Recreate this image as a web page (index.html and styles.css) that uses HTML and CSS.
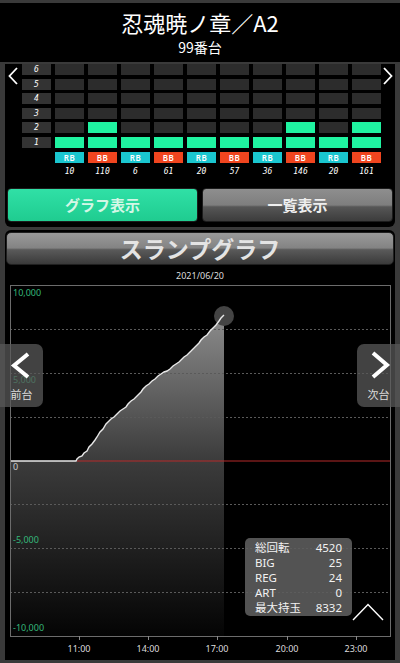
FILE: index.html
```html
<!DOCTYPE html>
<html lang="ja">
<head>
  <meta charset="UTF-8" />
  <meta name="viewport" content="width=device-width, initial-scale=1.0"/>
  <title>スランプグラフ</title>
  <link rel="stylesheet" href="styles.css">
</head>
<body>
  <div class="header">
    <div class="title">忍魂暁ノ章／A2</div>
    <div class="sub">99番台</div>
  </div>

  <div class="panel top">
    <div class="history">
      <div class="side left">
        <svg width="10" height="18" viewBox="0 0 10 18"><polyline points="9,1 1.5,9 9,17" fill="none" stroke="#fff" stroke-width="1.8"/></svg>
      </div>
      <div class="grid">
        <div class="lbl">6</div>
        <div class="c"></div><div class="c"></div><div class="c"></div><div class="c"></div><div class="c"></div>
        <div class="c"></div><div class="c"></div><div class="c"></div><div class="c"></div><div class="c"></div>
        <div class="lbl">5</div>
        <div class="c"></div><div class="c"></div><div class="c"></div><div class="c"></div><div class="c"></div>
        <div class="c"></div><div class="c"></div><div class="c"></div><div class="c"></div><div class="c"></div>
        <div class="lbl">4</div>
        <div class="c"></div><div class="c"></div><div class="c"></div><div class="c"></div><div class="c"></div>
        <div class="c"></div><div class="c"></div><div class="c"></div><div class="c"></div><div class="c"></div>
        <div class="lbl">3</div>
        <div class="c"></div><div class="c"></div><div class="c"></div><div class="c"></div><div class="c"></div>
        <div class="c"></div><div class="c"></div><div class="c"></div><div class="c"></div><div class="c"></div>
        <div class="lbl">2</div>
        <div class="c"></div><div class="c on"></div><div class="c"></div><div class="c"></div><div class="c"></div>
        <div class="c"></div><div class="c"></div><div class="c on"></div><div class="c"></div><div class="c on"></div>
        <div class="lbl">1</div>
        <div class="c on"></div><div class="c on"></div><div class="c on"></div><div class="c on"></div><div class="c on"></div>
        <div class="c on"></div><div class="c on"></div><div class="c on"></div><div class="c on"></div><div class="c on"></div>

        <div></div>
        <div class="kind rb">RB</div><div class="kind bb">BB</div><div class="kind rb">RB</div><div class="kind bb">BB</div><div class="kind rb">RB</div>
        <div class="kind bb">BB</div><div class="kind rb">RB</div><div class="kind bb">BB</div><div class="kind rb">RB</div><div class="kind bb">BB</div>

        <div></div>
        <div class="num">10</div><div class="num">110</div><div class="num">6</div><div class="num">61</div><div class="num">20</div>
        <div class="num">57</div><div class="num">36</div><div class="num">146</div><div class="num">20</div><div class="num">161</div>
      </div>
      <div class="side right">
        <svg width="10" height="18" viewBox="0 0 10 18"><polyline points="1,1 8.5,9 1,17" fill="none" stroke="#fff" stroke-width="1.8"/></svg>
      </div>
    </div>

    <div class="tabs">
      <div class="tab active">グラフ表示</div>
      <div class="tab">一覧表示</div>
    </div>
  </div>

  <div class="panel graph">
    <div class="graph-title">スランプグラフ</div>
    <div class="date">2021/06/20</div>

    <svg class="chart" width="390" height="376" viewBox="5 284 390 376">
      <defs>
        <linearGradient id="fill" gradientUnits="userSpaceOnUse" x1="0" y1="315" x2="0" y2="636">
          <stop offset="0" stop-color="#8c8c8c"/>
          <stop offset="0.45" stop-color="#3c3c3c"/>
          <stop offset="1" stop-color="#040404"/>
        </linearGradient>
      </defs>

      <path d="M10,461 L76,461 L77,459 L79,457 L82,456 L84,453 L87,451 L89,447 L92,444 L95,440 L97,437 L100,432 L103,429 L106,424 L108,422 L111,419 L114,417 L117,414 L120,411 L123,409 L126,407 L128,404 L131,401 L134,399 L137,396 L139,394 L141,392 L143,389 L146,386 L149,384 L152,381 L155,379 L158,376 L161,374 L164,372 L167,371 L170,369 L173,366 L176,364 L179,362 L182,359 L184,357 L187,355 L190,352 L193,349 L196,346 L199,343 L201,340 L204,337 L207,335 L210,331 L213,328 L216,325 L219,321 L221,318 L224,315 L224,636 L10,636 Z" fill="url(#fill)"/>

      <g stroke="#5a5a5a" stroke-width="1" stroke-dasharray="2,2">
        <line x1="10" y1="329.5" x2="390" y2="329.5"/>
        <line x1="10" y1="373.5" x2="390" y2="373.5"/>
        <line x1="10" y1="417.5" x2="390" y2="417.5"/>
        <line x1="10" y1="504.5" x2="390" y2="504.5"/>
        <line x1="10" y1="548.5" x2="390" y2="548.5"/>
        <line x1="10" y1="592.5" x2="390" y2="592.5"/>
      </g>
      <line x1="77" y1="461" x2="390" y2="461" stroke="#b52a2a" stroke-width="1.2"/>

      <circle cx="224" cy="316" r="10" fill="#444"/>
      <path d="M10,461 L76,461 L77,459 L79,457 L82,456 L84,453 L87,451 L89,447 L92,444 L95,440 L97,437 L100,432 L103,429 L106,424 L108,422 L111,419 L114,417 L117,414 L120,411 L123,409 L126,407 L128,404 L131,401 L134,399 L137,396 L139,394 L141,392 L143,389 L146,386 L149,384 L152,381 L155,379 L158,376 L161,374 L164,372 L167,371 L170,369 L173,366 L176,364 L179,362 L182,359 L184,357 L187,355 L190,352 L193,349 L196,346 L199,343 L201,340 L204,337 L207,335 L210,331 L213,328 L216,325 L219,321 L221,318 L224,315" fill="none" stroke="#e8e8e8" stroke-width="1.4"/>

      <rect x="10.5" y="285.5" width="380" height="351" fill="none" stroke="#6c6c6c" stroke-width="1"/>
      <g stroke="#888" stroke-width="1">
        <line x1="79.5" y1="636" x2="79.5" y2="640"/>
        <line x1="148.5" y1="636" x2="148.5" y2="640"/>
        <line x1="217.5" y1="636" x2="217.5" y2="640"/>
        <line x1="287.5" y1="636" x2="287.5" y2="640"/>
        <line x1="356.5" y1="636" x2="356.5" y2="640"/>
      </g>

      <g class="ylab">
        <text x="13" y="296">10,000</text>
        <text x="13" y="383">5,000</text>
        <text x="13" y="543">-5,000</text>
        <text x="13" y="631">-10,000</text>
      </g>
      <text class="zero" x="13" y="470">0</text>
      <g class="xlab">
        <text x="79" y="652">11:00</text>
        <text x="148" y="652">14:00</text>
        <text x="217" y="652">17:00</text>
        <text x="287" y="652">20:00</text>
        <text x="356" y="652">23:00</text>
      </g>
    </svg>

    <div class="jump prev">
      <svg width="43" height="40" viewBox="0 0 43 40"><polyline points="28,10 14,21.5 28,33" fill="none" stroke="#fff" stroke-width="4"/></svg>
      <span>前台</span>
    </div>
    <div class="jump next">
      <svg width="43" height="40" viewBox="0 0 43 40"><polyline points="16,9 30,21 16,33" fill="none" stroke="#fff" stroke-width="4"/></svg>
      <span>次台</span>
    </div>

    <div class="stats">
      <span>総回転</span><span class="v">4520</span>
      <span>BIG</span><span class="v">25</span>
      <span>REG</span><span class="v">24</span>
      <span>ART</span><span class="v">0</span>
      <span>最大持玉</span><span class="v">8332</span>
    </div>

    <svg class="to-top" width="32" height="18" viewBox="0 0 32 18"><polyline points="1,17 16,1.5 31,17" fill="none" stroke="#fff" stroke-width="1.4"/></svg>
  </div>
</body>
</html>
```

FILE: styles.css
```css
body {
  margin: 0;
  padding-top: 3px;
  width: 400px;
  height: 660px;
  overflow: hidden;
  background: #3a3a3a;
  color: #fff;
  font-family: "Noto Sans CJK JP", "Noto Sans", sans-serif;
}
.header {
  background: #000;
  height: 59px;
  text-align: center;
}
.title {
  padding-top: 6px;
  font-size: 22px;
  line-height: 26px;
}
.sub {
  margin-top: 3px;
  font-size: 14px;
  line-height: 18px;
}
.panel {
  background: #000;
  margin: 0 5px;
}
.panel.top {
  margin-top: 2px;
  padding-bottom: 5px;
  border-radius: 0 0 6px 6px;
}
.history {
  display: flex;
}
.side {
  width: 17px;
}
.side.left svg {
  margin: 3px 0 0 3px;
}
.side.right {
  width: 14px;
}
.side.right svg {
  margin: 3px 0 0 2px;
}
.grid {
  display: grid;
  grid-template-columns: repeat(11, 29px);
  grid-auto-rows: 11px;
  column-gap: 4px;
  row-gap: 3.6px;
}
.lbl {
  background: #333;
  font-family: "DejaVu Sans Mono", monospace;
  font-style: italic;
  font-size: 8px;
  line-height: 11px;
  text-align: center;
}
.c {
  background: #2c2c2c;
}
.c.on {
  background: #1ff3a0;
}
.kind {
  font-family: "Noto Sans", sans-serif;
  font-size: 8px;
  font-weight: 600;
  line-height: 11px;
  text-align: center;
  letter-spacing: 0.5px;
}
.rb {
  background: #1ac6cf;
}
.bb {
  background: #f0451f;
}
.num {
  font-family: "DejaVu Sans Mono", monospace;
  font-style: italic;
  font-size: 8px;
  line-height: 11px;
  text-align: center;
}
.tabs {
  display: flex;
  gap: 4px;
  margin-top: 11px;
  padding: 0 2px;
}
.tab {
  flex: 1;
  height: 32px;
  line-height: 32px;
  border: 1px solid #1c1c1c;
  border-radius: 4px;
  text-align: center;
  font-size: 15px;
  font-weight: bold;
  color: #eee;
  background: linear-gradient(#8e8e8e 0%, #7e7e7e 50%, #565656 56%, #3c3c3c 100%);
}
.tab.active {
  color: #d4f7e6;
  background: linear-gradient(#30e0a6, #1fcc90);
}
.panel.graph {
  position: relative;
  margin-top: 3px;
  height: 430px;
  padding-top: 2px;
  box-sizing: border-box;
  border-radius: 6px 6px 0 0;
}
.graph-title {
  margin: 0 1px;
  height: 31px;
  line-height: 31px;
  border: 1px solid #202020;
  border-radius: 5px;
  text-align: center;
  font-size: 23px;
  font-weight: bold;
  color: #e4e4e4;
  background: linear-gradient(#9a9a9a 0%, #838383 48%, #5a5a5a 54%, #3a3a3a 100%);
}
.date {
  height: 17px;
  padding-top: 2px;
  line-height: 17px;
  font-family: "Noto Sans", sans-serif;
  font-size: 9px;
  text-align: center;
  color: #ddd;
}
.chart {
  display: block;
}
.chart text {
  font-family: "Noto Sans", sans-serif;
  font-size: 9px;
}
.ylab {
  fill: #35b87a;
}
.zero {
  fill: #ccc;
}
.xlab {
  fill: #ddd;
  text-anchor: middle;
}
.jump {
  position: absolute;
  top: 114px;
  width: 43px;
  height: 63px;
  background: rgba(88, 88, 88, 0.75);
  text-align: center;
}
.jump svg {
  display: block;
}
.jump span {
  display: block;
  margin-top: 3px;
  font-size: 11px;
  line-height: 14px;
  color: #ddd;
}
.jump.prev {
  left: -5px;
  border-radius: 0 7px 7px 0;
}
.jump.next {
  left: 352px;
  border-radius: 7px 0 0 7px;
}
.stats {
  position: absolute;
  left: 240px;
  top: 308px;
  width: 107px;
  height: 78px;
  box-sizing: border-box;
  padding: 3px 10px 0 10px;
  border-radius: 5px;
  background: rgba(92, 92, 92, 0.9);
  display: grid;
  grid-template-columns: 1fr auto;
  font-family: "Noto Sans", "Noto Sans CJK JP", sans-serif;
  font-size: 11.5px;
  line-height: 14.6px;
  color: #f2f2f2;
}
.stats .v {
  text-align: right;
}
.to-top {
  position: absolute;
  left: 347px;
  top: 373px;
}
```
